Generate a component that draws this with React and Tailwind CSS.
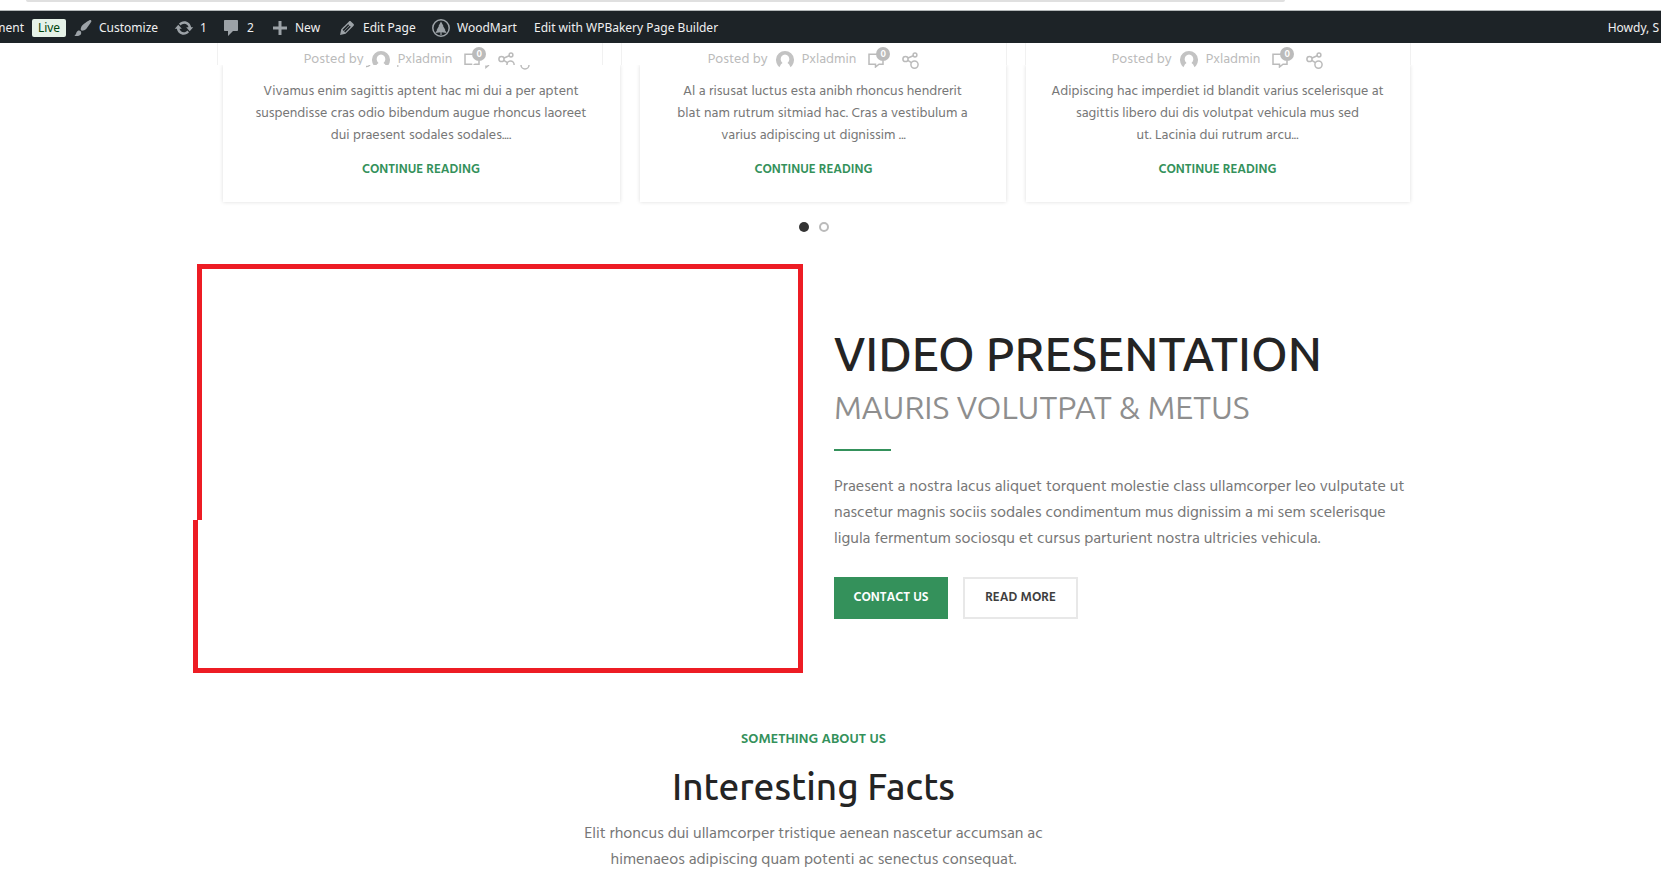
const ICONS = {
  customize:
    "M18.33 3.57s.27-.8-.31-1.36c-.53-.52-1.22-.24-1.22-.24-.61.3-5.76 3.47-7.67 5.57-.86.96-2.06 3.79-1.09 4.82.92.98 3.96-.17 4.79-1 2.06-2.06 5.21-7.17 5.5-7.79zM1.4 17.65c2.37-1.56 1.46-3.41 3.23-4.64.93-.65 2.22-.62 3.08.29.63.67.8 2.57-.16 3.46-1.57 1.45-4 1.55-6.15.89z",
  update:
    "M10.2 3.28c3.53 0 6.43 2.61 6.92 6h2.08l-3.5 4-3.5-4h2.32c-.45-1.97-2.21-3.45-4.32-3.45-1.45 0-2.73.71-3.54 1.78L4.95 5.66C6.23 4.2 8.11 3.28 10.2 3.28zm-.4 13.44c-3.52 0-6.43-2.61-6.92-6H.8l3.5-4c1.17 1.33 2.33 2.67 3.5 4H5.48c.45 1.97 2.21 3.45 4.32 3.45 1.45 0 2.73-.71 3.54-1.78l1.71 1.95c-1.28 1.46-3.15 2.38-5.25 2.38z",
  comments: "M4 2h12c.6 0 1 .4 1 1v9c0 .6-.4 1-1 1h-4l-5 5v-5H4c-.6 0-1-.4-1-1V3c0-.6.4-1 1-1z",
  plus: "M18 8.5v3h-5.5V17h-3v-5.5H4v-3h5.500V3h3v5.500H18z",
  edit: "M13.89 3.39l2.71 2.72c.46.46.42 1.24.03 1.64l-8.01 8.02-5.56 1.16 1.16-5.58s7.6-7.63 7.99-8.03c.39-.39 1.22-.39 1.68.07zm-2.73 2.79l-5.59 5.61 1.11 1.11 5.54-5.65zm-2.97 8.23l5.58-5.6-1.07-1.08-5.59 5.6z",
};

function WoodMartIcon() {
  return (
    <svg viewBox="0 0 20 20" className="size-5 shrink-0" aria-hidden="true">
      <circle cx="10" cy="10" r="8.200" fill="none" stroke="#9ca2a7" strokeWidth="1.500" />
      <path d="M10 3.500l2.600 4.700-.6-.1 2.400 3.800-.6-.1 1.800 3.200-5-.7v2.700h-1.200v-2.700l-5 .7 1.800-3.200-.6.1L8 8.100l-.6.1z" fill="#9ca2a7" />
    </svg>
  );
}

function BarItem({ icon, label, className = "" }) {
  return (
    <a href="#" className={`flex h-8 shrink-0 items-center gap-[6px] ${className}`}>
      {icon && (
        <svg viewBox="0 0 20 20" className="size-5 shrink-0" fill="#9ca2a7" aria-hidden="true">
          <path d={ICONS[icon]} />
        </svg>
      )}
      {label === "WoodMart" && <WoodMartIcon />}
      <span>{label}</span>
    </a>
  );
}

function AdminBar() {
  return (
    <header>
      <div className="h-[10px] bg-white pl-[26px] pr-[376px]">
        <div className="h-[2px] rounded-b-lg bg-[#e0e0e0]" />
      </div>
      <nav className="flex h-[33px] items-center overflow-hidden whitespace-nowrap border-t border-[#b4b8b9] bg-[#1d2327] pt-px font-['Noto_Sans',sans-serif] text-[12px] leading-8 text-[#f0f0f1]">
        <a href="#" className="flex w-[73px] shrink-0 items-center gap-2">
          <span className="flex w-6 justify-end">ment</span>
          <span className="flex h-[18px] w-[34px] items-center justify-center rounded-[2px] bg-[#e6f2e8] leading-[18px] text-[#00450c]">
            Live
          </span>
        </a>
        <BarItem icon="customize" label="Customize" className="w-[101px]" />
        <BarItem icon="update" label="1" className="w-[47px]" />
        <BarItem icon="comments" label="2" className="w-12" />
        <BarItem icon="plus" label="New" className="w-[68px]" />
        <BarItem icon="edit" label="Edit Page" className="w-[94px]" />
        <BarItem label="WoodMart" className="w-[103px]" />
        <BarItem label="Edit with WPBakery Page Builder" />
        <BarItem label="Howdy, S" className="ml-auto pr-[2px]" />
      </nav>
    </header>
  );
}

function PostMeta() {
  return (
    <div className="relative z-10 flex h-[26px] items-center justify-center text-[14px] leading-[26px] text-[#bbb]">
      <span className="mr-2">Posted by</span>
      <svg viewBox="0 0 18 18" className="mr-2 size-[18px]" aria-hidden="true">
        <path d="M1.800 14.400A9 9 0 1 1 16.200 14.400L14.600 16.200L13 13.200L11.500 12A4.300 4.700 0 1 0 6.500 12L5 13.200L3.400 16.200Z" fill="#c3c3c3" />
      </svg>
      <a href="#">Pxladmin</a>
      <a href="#" aria-label="Comments" className="relative ml-3 mr-[18px] block w-4">
        <svg viewBox="0 0 16 16" className="size-4" fill="none" stroke="#bbb" strokeWidth="1.500" aria-hidden="true">
          <path d="M9 2.200H1V12.200H7.500V15L11 12.200H15V9" />
        </svg>
        <span className="absolute -top-[5px] left-2 size-[14px] rounded-full bg-[#bbb] text-center text-[10px] leading-[15px] font-semibold text-white">
          0
        </span>
      </a>
      <button type="button" aria-label="Share">
        <svg viewBox="0 0 17 17" className="size-[17px]" fill="none" stroke="#bbb" strokeWidth="1.500" aria-hidden="true">
          <circle cx="3.500" cy="7" r="2.600" />
          <circle cx="13" cy="3" r="1.900" />
          <circle cx="12.500" cy="12.600" r="3.600" />
          <path d="M6 6l5.200-2.200M5.800 8.400l3.600 2.300" />
        </svg>
      </button>
    </div>
  );
}

const metaCell = "-mx-px h-[22px] border-x border-[#f1f1f1] pt-1";

function CardBody({ children, className = "" }) {
  return (
    <article
      className={`bg-white pt-4 pb-[22px] text-center text-[14px] leading-[22px] text-[#777] shadow-[0_0_4px_rgba(0,0,0,0.14)] ${className}`}
    >
      {children}
    </article>
  );
}

function ReadLink() {
  return (
    <a href="#" className="mt-[13px] block text-[13px] leading-5 font-semibold text-[#34915b]">
      CONTINUE READING
    </a>
  );
}

function Posts() {
  return (
    <section className="mx-auto max-w-[1192px]">
      <div className="grid grid-cols-3 gap-5">
        <div className={`overflow-hidden ${metaCell}`}>
          <PostMeta />
        </div>
        <div className={metaCell}>
          <PostMeta />
        </div>
        <div className={metaCell}>
          <PostMeta />
        </div>
      </div>
      <div className="-mx-2 overflow-hidden px-2 pb-2">
        <div className="grid grid-cols-[397fr_366fr_384fr] gap-5 pl-[5px]">
          <CardBody className="relative">
            <svg viewBox="0 0 180 5" className="absolute top-0 left-[140px] h-[5px] w-[180px]" fill="none" stroke="#bbb" strokeWidth="1.500" aria-hidden="true">
              <path d="M3 1.500q2 .5 4-1.500M34 1h1.500M123 .5v2l3-2.500M158 0a4 4 0 0 0 8 0" />
            </svg>
            <p>
              Vivamus enim sagittis aptent hac mi dui a per aptent
              <br />
              suspendisse cras odio bibendum augue rhoncus laoreet
              <br />
              dui praesent sodales sodales....
            </p>
            <ReadLink />
          </CardBody>
          <CardBody>
            <p>
              Al a risusat luctus esta anibh rhoncus hendrerit
              <br />
              blat nam rutrum sitmiad hac. Cras a vestibulum a
            </p>
            <div className="pr-[18px]">
              <p>varius adipiscing ut dignissim ...</p>
              <ReadLink />
            </div>
          </CardBody>
          <CardBody>
            <p>
              Adipiscing hac imperdiet id blandit varius scelerisque at
              <br />
              sagittis libero dui dis volutpat vehicula mus sed
              <br />
              ut. Lacinia dui rutrum arcu...
            </p>
            <ReadLink />
          </CardBody>
        </div>
      </div>
      <div className="mt-3 flex justify-center gap-[10px]">
        <button type="button" aria-label="Slide 1" className="size-[10px] rounded-full bg-[#333]" />
        <button type="button" aria-label="Slide 2" className="size-[10px] rounded-full border-2 border-[#bbb]" />
      </div>
    </section>
  );
}

function Video() {
  return (
    <section className="mx-auto mt-8 grid max-w-[1241px] grid-cols-[610fr_600fr] items-start gap-[31px]">
      <div>
        <div className="ml-1 h-64 border-x-[5px] border-t-[5px] border-[#ed1c24]" />
        <div className="h-[153px] border-x-[5px] border-b-[5px] border-[#ed1c24]" />
      </div>
      <div className="pt-[62px] pr-6">
        <h2 className="font-['Ubuntu','Noto_Sans',sans-serif] text-[47px] leading-[56px] font-medium whitespace-nowrap text-[#242424]">
          VIDEO PRESENTATION
        </h2>
        <p className="mt-1 font-['Ubuntu','Noto_Sans',sans-serif] text-[32px] leading-[42px] font-normal whitespace-nowrap text-[#8e8e8e]">
          MAURIS VOLUTPAT &amp; METUS
        </p>
        <hr className="mt-[21px] h-[2px] w-[57px] border-0 bg-[#34915b]" />
        <p className="mt-[23px] text-[16px] leading-[26px] text-[#777]">
          Praesent a nostra lacus aliquet torquent molestie class ullamcorper leo vulputate ut nascetur magnis sociis
          sodales condimentum mus dignissim a mi sem scelerisque ligula fermentum sociosqu et cursus parturient nostra
          ultricies vehicula.
        </p>
        <div className="mt-[25px] flex gap-[15px] text-[13px] leading-5 font-semibold">
          <button type="button" className="h-[42px] w-[114px] bg-[#34915b] text-white">
            CONTACT US
          </button>
          <button type="button" className="h-[42px] w-[115px] border-2 border-[#e8e8e8] text-[#3e3e3e]">
            READ MORE
          </button>
        </div>
      </div>
    </section>
  );
}

function Facts() {
  return (
    <section className="mt-14 text-center">
      <p className="text-[14px] leading-[22px] font-semibold text-[#34915b]">SOMETHING ABOUT US</p>
      <h2 className="mt-[13px] font-['Ubuntu','Noto_Sans',sans-serif] text-[37px] leading-[46px] font-medium text-[#242424]">
        Interesting Facts
      </h2>
      <p className="mx-auto mt-[11px] max-w-[480px] text-[16px] leading-[26px] text-[#777]">
        Elit rhoncus dui ullamcorper tristique aenean nascetur accumsan ac himenaeos adipiscing quam potenti ac senectus
        consequat.
      </p>
    </section>
  );
}

export default function App() {
  return (
    <div className="bg-white font-['Hind','Noto_Sans',sans-serif]">
      <AdminBar />
      <main className="pr-[34px]">
        <Posts />
        <Video />
        <Facts />
      </main>
    </div>
  );
}
